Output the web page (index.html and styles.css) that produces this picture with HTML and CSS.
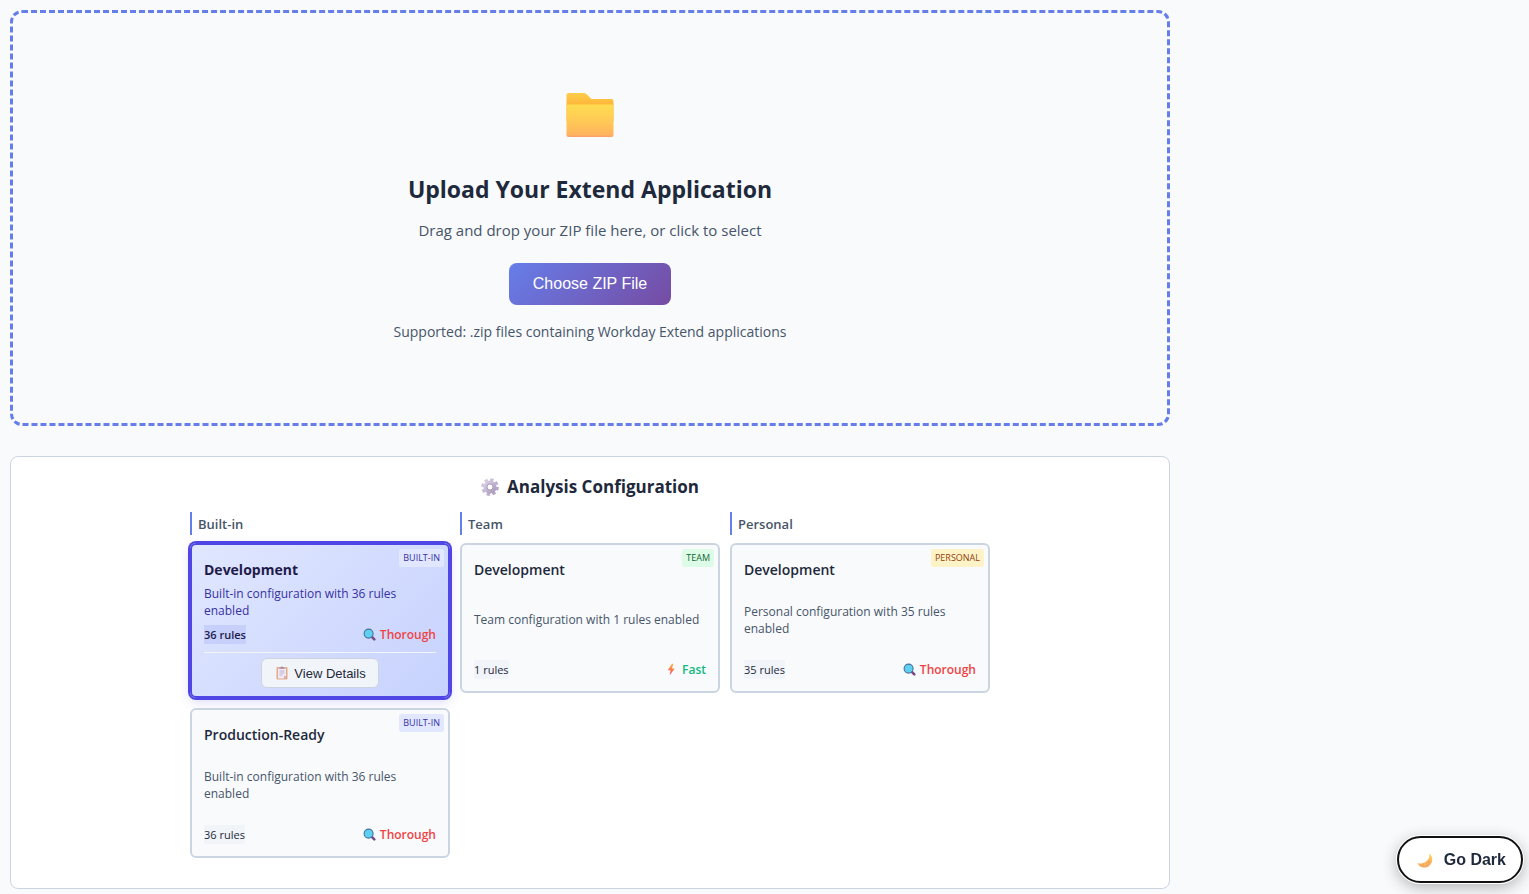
FILE: index.html
```html
<!DOCTYPE html>
<html lang="en">
<head>
<meta charset="utf-8">
<meta name="viewport" content="width=device-width, initial-scale=1">
<title>Extend Application Analysis</title>
<link rel="stylesheet" href="styles.css">
</head>
<body>
<svg class="defs" aria-hidden="true">
  <defs>
    <linearGradient id="folder-back" x1="0" y1="0" x2="0" y2="1"><stop offset="0" stop-color="#ffce4b"/><stop offset=".4" stop-color="#fdb73a"/></linearGradient>
    <linearGradient id="folder-front" x1="0" y1="0" x2="0" y2="1"><stop offset="0" stop-color="#ffdc51"/><stop offset=".5" stop-color="#ffca56"/><stop offset=".93" stop-color="#ffb35e"/><stop offset="1" stop-color="#fc9c6c"/></linearGradient>
    <linearGradient id="bolt-fill" x1="0" y1="0" x2="0" y2="1"><stop offset="0" stop-color="#ffb33e"/><stop offset="1" stop-color="#f4455c"/></linearGradient>
    <linearGradient id="moon-fill" x1="0" y1="0" x2="0" y2="1"><stop offset="0" stop-color="#ffd35c"/><stop offset="1" stop-color="#f7a25c"/></linearGradient>
    <linearGradient id="gear-fill" x1="0" y1="0" x2="1" y2="1"><stop offset="0" stop-color="#d9cfe5"/><stop offset="1" stop-color="#ab9bbd"/></linearGradient>
    <symbol id="search" viewBox="0 0 13 13"><path d="M8.400 8.400 11.300 11.300" stroke="#7b4a83" stroke-width="2.600" stroke-linecap="round"/><circle cx="5.600" cy="5.600" r="4.500" fill="#5fd0f0" stroke="#44739f" stroke-width="1.100"/></symbol>
  </defs>
</svg>

<main class="container">
  <section class="upload">
    <svg class="folder" viewBox="0 0 48 48" aria-hidden="true">
      <path d="M.5 4Q.5 2 2.500 2H18q1.400 0 2.400 1L25.500 8H45.500q2 0 2 2V30H.5Z" fill="url(#folder-back)"/>
      <path d="M.5 15.500q0-2 2-2H45.500q2 0 2 2V44q0 2-2 2H2.500q-2 0-2-2Z" fill="url(#folder-front)"/>
    </svg>
    <h1 class="upload-title">Upload Your Extend Application</h1>
    <p class="upload-text">Drag and drop your ZIP file here, or click to select</p>
    <button class="choose" type="button">Choose ZIP File</button>
    <p class="upload-note">Supported: .zip files containing Workday Extend applications</p>
  </section>

  <section class="config">
    <h2 class="config-title">
      <svg class="gear" viewBox="0 0 18 18" aria-hidden="true">
        <circle cx="9" cy="9" r="7.300" fill="none" stroke="url(#gear-fill)" stroke-width="3" stroke-dasharray="3.200 2.533"/>
        <circle cx="9" cy="9" r="4.800" fill="none" stroke="url(#gear-fill)" stroke-width="3.600"/>
        <circle cx="9" cy="9" r="3" fill="none" stroke="#9a8cab" stroke-width=".8"/>
      </svg>
      Analysis Configuration
    </h2>
    <div class="columns">
      <div class="column">
        <h3 class="column-title">Built-in</h3>
        <article class="card selected">
          <span class="badge built-in">BUILT-IN</span>
          <h4 class="card-title">Development</h4>
          <p class="card-text">Built-in configuration with 36 rules enabled</p>
          <div class="meta"><span class="rules">36 rules</span><span class="speed thorough"><svg class="icon" aria-hidden="true"><use href="#search"/></svg>Thorough</span></div>
          <div class="actions">
            <button class="details" type="button">
              <svg class="clip" viewBox="0 0 12 14" aria-hidden="true"><rect x=".5" y="1" width="11" height="12.500" rx="1" fill="#e5a98a"/><path d="M2 2.500h8v7.500L8 12.500H2Z" fill="#f1eaf6"/><path d="M10 10 8 12.500V10Z" fill="#bca9cd"/><path d="M3.500 2.800V1.500h1.500q0-1 1-1t1 1h1.500v1.300Z" fill="#9b8aa9"/><path d="M3.500 5h5M3.500 7h5M3.500 9h3" stroke="#b5a5c3" stroke-width=".8"/></svg>
              View Details
            </button>
          </div>
        </article>
        <article class="card">
          <span class="badge built-in">BUILT-IN</span>
          <h4 class="card-title">Production-Ready</h4>
          <p class="card-text">Built-in configuration with 36 rules enabled</p>
          <div class="meta"><span class="rules">36 rules</span><span class="speed thorough"><svg class="icon" aria-hidden="true"><use href="#search"/></svg>Thorough</span></div>
        </article>
      </div>
      <div class="column">
        <h3 class="column-title">Team</h3>
        <article class="card">
          <span class="badge team">TEAM</span>
          <h4 class="card-title">Development</h4>
          <p class="card-text">Team configuration with 1 rules enabled</p>
          <div class="meta"><span class="rules">1 rules</span><span class="speed fast"><svg class="icon" viewBox="0 0 14 14" aria-hidden="true"><path d="M7.500.8 3 7.800h3L5 13.300 10.500 6H7.500L9 .8Z" fill="url(#bolt-fill)"/></svg>Fast</span></div>
        </article>
      </div>
      <div class="column">
        <h3 class="column-title">Personal</h3>
        <article class="card">
          <span class="badge personal">PERSONAL</span>
          <h4 class="card-title">Development</h4>
          <p class="card-text">Personal configuration with 35 rules enabled</p>
          <div class="meta"><span class="rules">35 rules</span><span class="speed thorough"><svg class="icon" aria-hidden="true"><use href="#search"/></svg>Thorough</span></div>
        </article>
      </div>
    </div>
  </section>
</main>

<button class="theme" type="button">
  <svg class="moon" viewBox="0 0 16 16" aria-hidden="true"><path d="M12.300 1.500c4.200 3.600 3.800 9.300-.3 12.400C8 16.800 2.500 15.600.4 10.900c3.300 1.200 6.800.8 9.200-1.800 2.300-2.400 3.100-4.500 2.700-7.600Z" fill="url(#moon-fill)"/><circle cx="12" cy="10" r="1" fill="#ef9b55"/><circle cx="8" cy="12.500" r=".9" fill="#ffc77a"/></svg>
  Go Dark
</button>
</body>
</html>
```

FILE: styles.css
```css
* { box-sizing: border-box; }

body {
  margin: 10px 10px 0;
  background: #f8fafc;
  color: #1e293b;
  font-family: "Segoe UI", "Open Sans", "Noto Sans", sans-serif;
}

h1, h2, h3, h4, p { margin: 0; }
button { font-family: Arial, "Liberation Sans", sans-serif; cursor: pointer; }
svg { display: block; flex: none; }
.defs { position: absolute; width: 0; height: 0; }

.container { max-width: 1160px; }

.upload {
  display: flex;
  flex-direction: column;
  align-items: center;
  padding: 78px 20px 80px;
  border: 3px dashed #667eea;
  border-radius: 12px;
  text-align: center;
}
.folder { width: 48px; height: 48px; margin-bottom: 32px; }
.upload-title { margin-bottom: 11px; font-size: 23px; line-height: 36px; font-weight: 700; }
.upload-text { margin-bottom: 21px; color: #475569; font-size: 15px; line-height: 24px; }
.choose {
  height: 42px;
  margin-bottom: 16px;
  padding: 0 24px;
  border: 0;
  border-radius: 8px;
  background: linear-gradient(135deg, #667eea, #764ba2);
  color: #fff;
  font-size: 16px;
}
.upload-note { color: #475569; font-size: 14px; line-height: 22px; }

.config {
  margin-top: 30px;
  padding: 16px 16px 30px;
  border: 1px solid #cbd5e1;
  border-radius: 8px;
  background: #fff;
}
.config-title {
  display: flex;
  align-items: center;
  justify-content: center;
  gap: 8px;
  margin-bottom: 12px;
  font-size: 17px;
  line-height: 27px;
  font-weight: 700;
}
.gear { width: 18px; height: 18px; }

.columns {
  display: grid;
  grid-template-columns: repeat(3, 1fr);
  gap: 10px;
  max-width: 800px;
  margin: 0 auto;
}
.column { display: flex; flex-direction: column; gap: 10px; }
.column-title {
  margin-bottom: -2px;
  padding: 2px 0 0 6px;
  border-left: 2px solid #667eea;
  color: #475569;
  font-size: 13px;
  line-height: 21px;
  font-weight: 600;
}

.card {
  position: relative;
  display: flex;
  flex-direction: column;
  min-height: 150px;
  padding: 12px;
  border: 2px solid #cbd5e1;
  border-radius: 6px;
  background: #f8fafc;
}
.card-title { font-size: 14px; line-height: 26px; font-weight: 600; }
.card-text {
  display: flex;
  flex: 1;
  align-items: center;
  margin: 2px 0 6px;
  color: #475569;
  font-size: 12px;
  line-height: 17px;
}
.meta { display: flex; align-items: center; justify-content: space-between; font-size: 12px; line-height: 19px; }
.rules { background: #f1f5f9; font-size: 11px; }
.speed { display: flex; align-items: center; gap: 4px; font-weight: 600; }
.icon { width: 13px; height: 13px; }
.thorough { color: #ef4444; }
.fast { color: #10b981; }

.badge {
  position: absolute;
  top: 4px;
  right: 4px;
  padding: 0 4px;
  border-radius: 3px;
  font-size: 9px;
  line-height: 18px;
  font-weight: 500;
}
.built-in { background: #e0e7ff; color: #3730a3; }
.team { background: #dcfce7; color: #166534; }
.personal { background: #fef3c7; color: #92400e; }

.selected {
  padding-bottom: 8px;
  border-color: #4f46e5;
  background: linear-gradient(135deg, #e0e7ff, #c7d2fe);
  box-shadow: 0 0 0 2px #4f46e5, 0 4px 12px rgba(79, 70, 229, .2);
}
.selected .card-title { color: #1e1b4b; font-weight: 700; }
.selected .card-text { color: #3730a3; }
.selected .rules { background: #c7d0fb; color: #1e1b4b; font-weight: 600; }
.actions {
  display: flex;
  justify-content: center;
  margin-top: 8px;
  padding-top: 5px;
  border-top: 1px solid #f1f5f9;
}
.details {
  display: flex;
  align-items: center;
  gap: 6px;
  height: 30px;
  padding: 0 12px 0 14px;
  border: 1px solid #cbd5e1;
  border-radius: 6px;
  background: #f1f5f9;
  color: #1e293b;
  font-size: 13px;
}
.clip { width: 12px; height: 14px; }

.theme {
  position: fixed;
  right: 6px;
  bottom: 11px;
  display: flex;
  align-items: center;
  gap: 11px;
  height: 47px;
  padding: 0 15px 0 18px;
  border: 2px solid #111;
  border-radius: 24px;
  background: #fff;
  box-shadow: 0 0 0 1px #fff, 0 4px 16px rgba(0, 0, 0, .3);
  color: #1e293b;
  font-size: 16px;
  font-weight: 700;
}
.moon { width: 16px; height: 16px; }
```
